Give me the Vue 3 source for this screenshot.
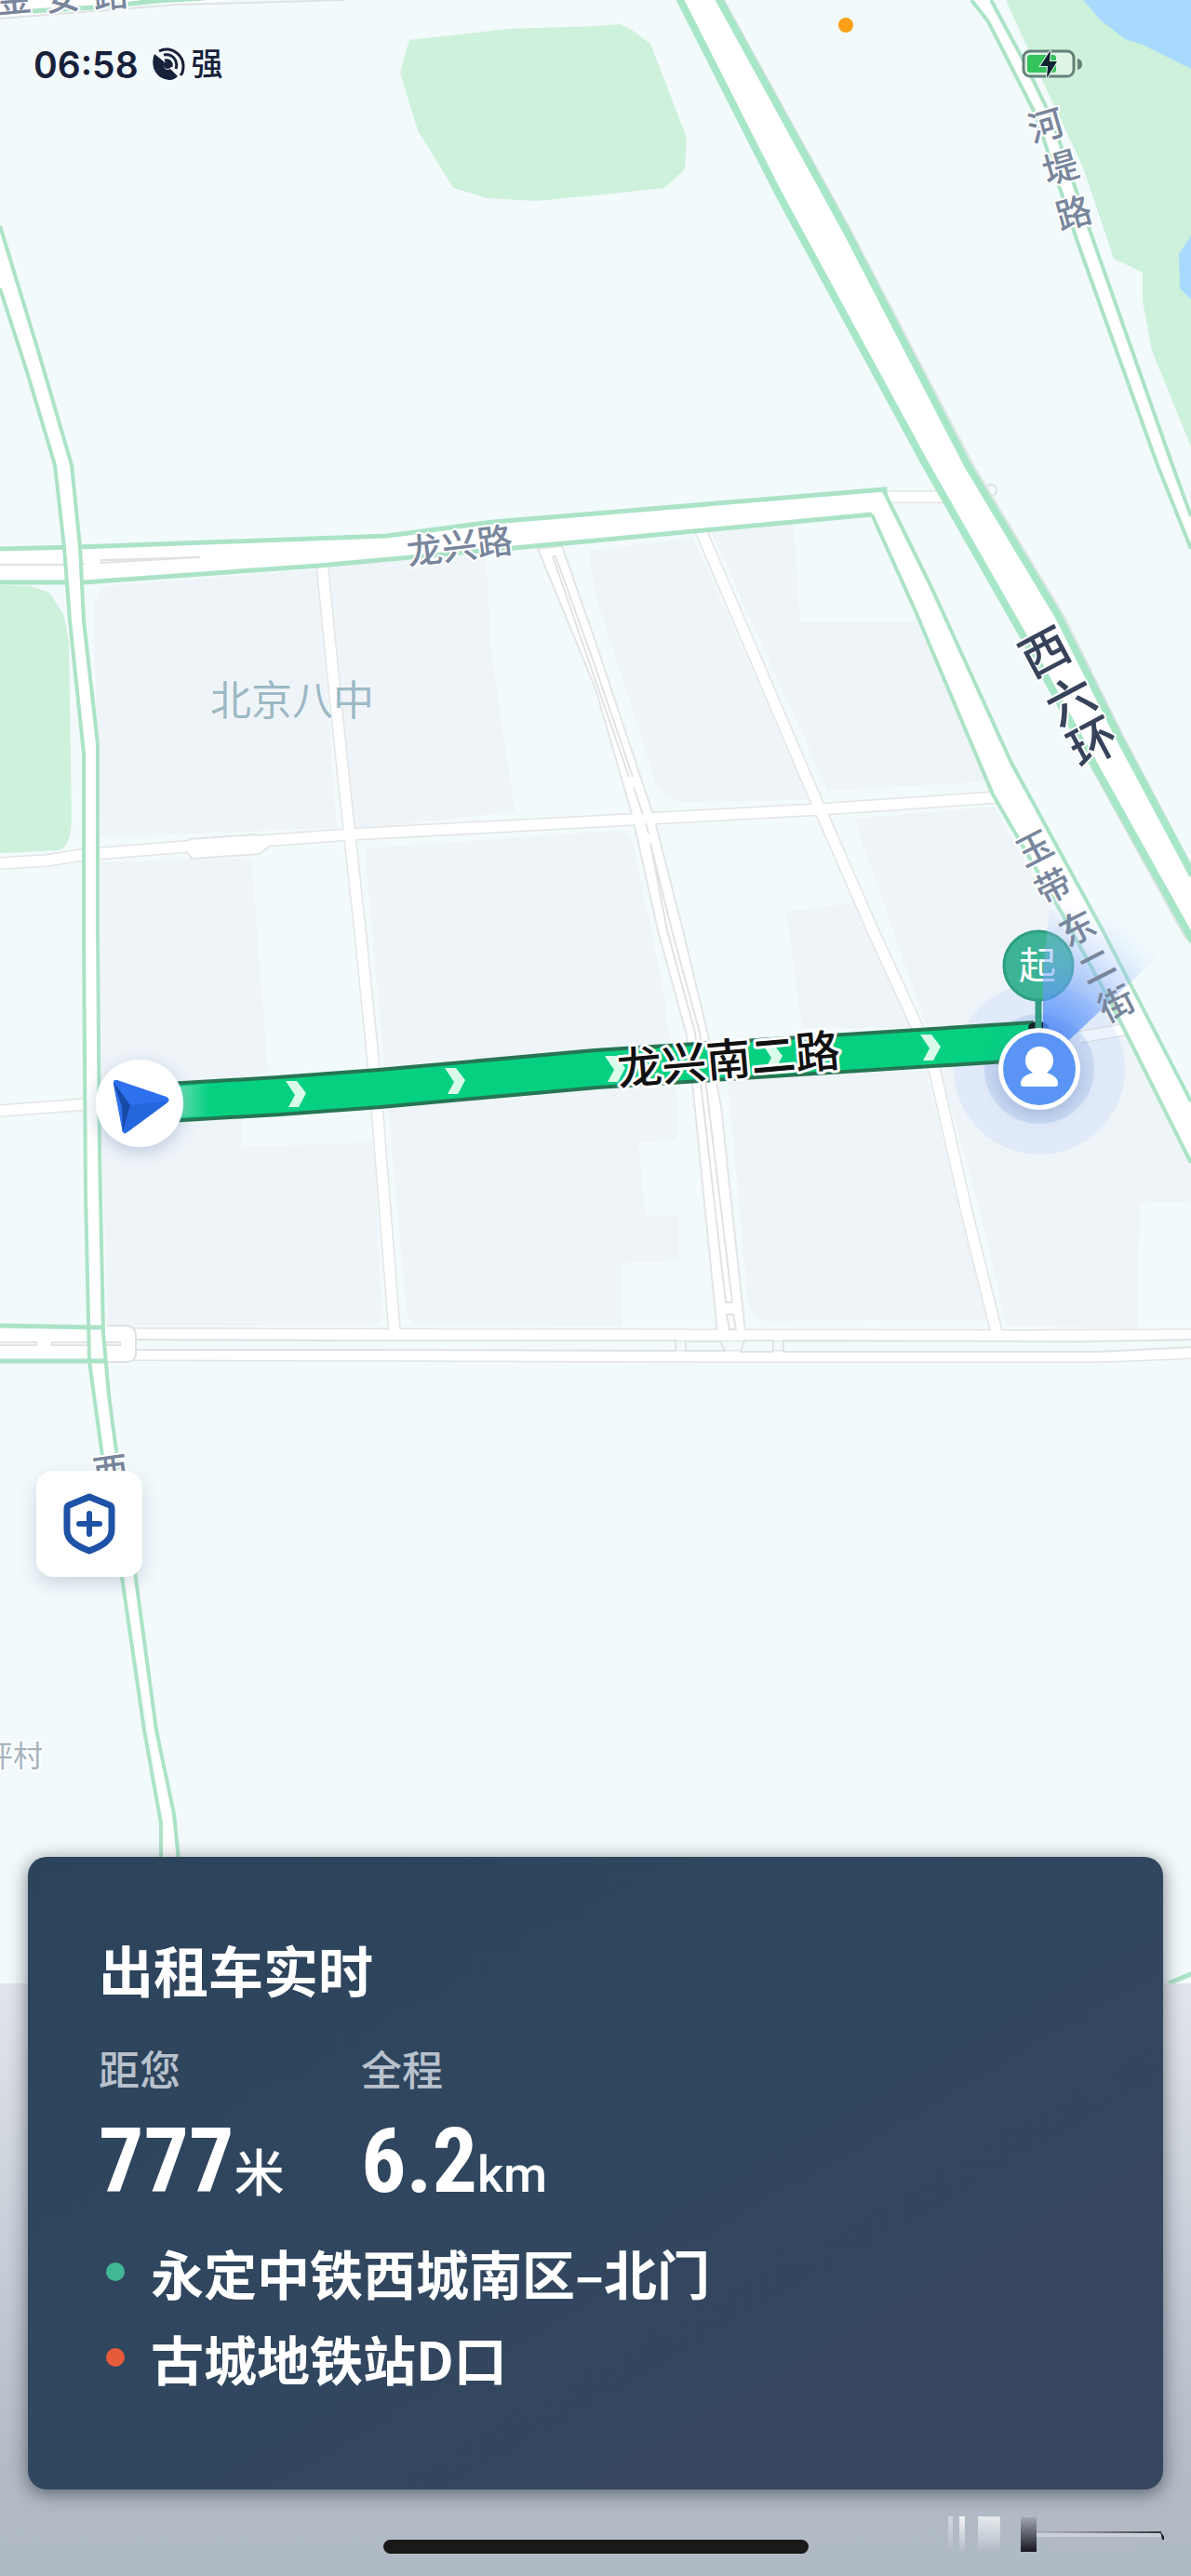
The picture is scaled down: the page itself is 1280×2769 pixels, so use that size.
<template>
  <div class="page">
    <!-- 地图底图 -->
    <svg class="map" viewBox="0 0 1280 2769" preserveAspectRatio="xMidYMin slice" aria-label="地图">
      <defs>
        <radialGradient id="beam" gradientUnits="userSpaceOnUse" cx="1117" cy="1130" r="168">
          <stop offset="0" stop-color="#3f80fa" stop-opacity="0.95" />
          <stop offset="0.35" stop-color="#5f97fb" stop-opacity="0.7" />
          <stop offset="0.7" stop-color="#8fb6fc" stop-opacity="0.35" />
          <stop offset="1" stop-color="#cfe0fe" stop-opacity="0" />
        </radialGradient>
        <linearGradient id="routeHead" x1="0" x2="1" y1="0" y2="0">
          <stop offset="0" stop-color="#ffffff" stop-opacity="0.4" />
          <stop offset="1" stop-color="#ffffff" stop-opacity="0" />
        </linearGradient>
        <filter id="soft" x="-50%" y="-50%" width="200%" height="200%">
          <feDropShadow dx="0" dy="5" stdDeviation="9" flood-color="#5877a8" flood-opacity="0.35" />
        </filter>
      </defs>

      <!-- 绿地和水系 -->
      <path v-for="d in parks" :key="d" class="park" :d="d" />
      <path v-for="d in waters" :key="d" class="water" :d="d" />

      <!-- 街区 -->
      <path v-for="d in blocks" :key="d" class="block" :d="d" />

      <!-- 支路 -->
      <path v-for="d in lanes" :key="'c' + d" class="lane-case" :d="d" />
      <path class="wide" d="M198 912 L203 902 L275 897 L290 900 V909 L279 918 L206 923 Z" />
      <path class="wide" d="M578 590 L640 740 L679 875 L707 1000 L738 1113 L745 1173 L771 1432 H801 L775 1190 L762 1117 L734 1000 L705 887 L701 873 L640 690 L604 587 Z" />
      <path v-for="d in lanes" :key="'f' + d" class="lane" :d="d" />
      <path class="median" d="M594 598 H597 L638 712 L680 835 M594 598 L636 720 L676 835 M681 846 L691 876 M694 885 L697 896 M699 906 L722 1000 L752 1110 L787 1400 H780 L747 1110 L717 1000 Z M781 1413 H788 L791 1429 H784 Z" />
      <path class="median fill" d="M146 1440 L400 1441 H726 V1452 L400 1451 H146 Z M737 1442 H774 L779 1452 H737 Z M800 1441 H831 V1453 H796 Z M842 1441 L1160 1442 L1282 1440 V1448 L1180 1453 H842 Z" />
      <circle class="median" cx="1065" cy="527" r="6" />

      <!-- 主路 -->
      <path class="road" d="M0 1425 H136 Q146 1426 146 1436 V1454 Q146 1464 136 1464 H0 Z" />
      <path class="median box" d="M115 1425 H136 Q146 1426 146 1436 V1454 Q146 1464 136 1464 H115" />
      <path class="median" d="M0 1443 H39 V1446 H0 M56 1443 H129 V1446 H56 Z" />
      <path class="road" d="M0 590 L86 588 L416 576 L530 561 L640 552 L951 526 L999 627 L1093 827 L1185 1000 L1280 1184 V1250 L1195 1080 L1073 863 L983 655 L937 553 L640 581 L343 608 L90 626 H0 Z" />
      <path class="edge" d="M0 590 L86 588 L416 576 L530 561 L640 552 L951 526 V531 M0 626 H90 L343 608 L640 581 L937 553" />
      <path class="edge thin" d="M951 530 L999 627 L1087 820 L1185 1000 L1280 1184 M937 553 L983 655 L1067 854 L1142 983 L1195 1080 L1280 1250" />
      <path class="median" d="M109 602 L215 599 L109 605 Z M0 607 H70 M90 605 V607" />
      <path class="road" d="M-3 235 L0 243 L41 377 L77 500 L86 588 L90 667 L105 800 V1000 L107 1240 L111 1433 L117 1500 L125 1560 L145 1690 L168 1860 L187 1950 L193 2010 H173 V1960 L160 1860 L131 1695 L110 1565 L101 1500 L96 1463 L92 1283 L90 1000 V800 L75 667 L69 588 L59 500 L30 403 L0 310 Z" />
      <path class="edge thin" d="M0 243 L41 377 L77 500 L86 588 L90 667 L105 800 V1000 L107 1240 L111 1433 L117 1500 L125 1560 L145 1690 L168 1860 L187 1950 L193 2010 M0 310 L30 403 L59 500 L69 588 L75 667 L90 810 V1000 L92 1283 L96 1463 L101 1500 L110 1565 L131 1695 L155 1860 L173 1960 V2010" />
      <path class="edge" d="M0 1425 L112 1427 M0 1463 H113" />
      <path class="median" d="M778 0 L914 247 L1046 500 L1144 663 L1208 793 L1280 930 M1090 665 L1150 783 L1264 990 L1275 1010" />
      <path class="road" d="M729 0 H773 L909 247 L1040 500 L1138 663 L1203 793 L1280 937 V1008 L1158 783 L1101 680 L995 500 L836 207 Z" />
      <path class="edge bold" d="M729 -4 L836 207 L995 500 L1101 686 L1158 790 L1282 1012 M771 -4 L909 247 L1040 500 L1138 663 L1203 793 L1282 941" />
      <path class="road" d="M1044 0 H1065 L1101 67 L1130 127 L1171 247 L1260 500 L1280 555 V587 L1244 500 L1158 260 L1113 123 L1062 23 Z" />
      <path class="edge thin" d="M1044 0 L1062 23 L1113 123 L1158 260 L1244 500 L1280 590 M1065 0 L1101 67 L1130 127 L1171 247 L1260 500 L1280 555" />
      <path class="road" d="M0 18 L190 3 L250 0 H0 Z" />
      <path class="edge" d="M0 14 L100 8 L180 0 M150 2 L220 -2" />
      <path class="median" d="M0 20 L190 5 L370 0" />
      <path class="edge" d="M1256 2132 L1282 2121" />

      <!-- 定位光圈 -->
      <circle cx="1117" cy="1149" r="92" class="halo" />
      <circle cx="1117" cy="1149" r="59" class="halo inner" />

      <!-- 路线 -->
      <path class="route-case" :d="route" />
      <path class="route" :d="route" />
      <path d="M190 1168 L225 1165 V1199 L190 1201 Z" fill="url(#routeHead)" />
      <path
        v-for="c in chevrons"
        :key="c.x"
        class="chevron"
        d="M-11 -14 H1 L11 -1 L3 14 H-8 L-1 1 Z"
        :transform="`translate(${c.x} ${c.y})`"
      />

      <!-- 文字标注 -->
      <text
        v-for="(t, i) in labels"
        :key="i"
        :class="['label', t.kind]"
        :transform="`translate(${t.x} ${t.y}) rotate(${t.r})`"
        dy="0.36em"
      >{{ t.text }}</text>

      <!-- 车辆位置 -->
      <circle cx="150" cy="1186" r="47" fill="#fff" filter="url(#soft)" />
      <path d="M126 1161 L179 1179 Q184 1182 179 1186 L137 1217 Q131 1220 131 1213 L122 1166 Q121 1160 126 1161 Z" fill="#2e70ee" />
      <path d="M122 1163 L140 1188 L132 1217 L131 1190 Z" fill="#184aa8" />
      <path d="M140 1188 L182 1183 L133 1219 Z" fill="#2466dc" />

      <!-- 起点 -->
      <ellipse cx="1116" cy="1104" rx="11" ry="6" fill="#10201f" />
      <path d="M1116 1070 V1106" class="stem" />
      <circle cx="1116" cy="1038" r="37" class="pin" />
      <text class="pin-text" x="1115" y="1038" dy="0.36em">起</text>
      <path d="M1121 1116 V1040 L1130 960 L1270 960 L1270 1004 L1149 1118 Z" fill="url(#beam)" />
      <text
        v-for="(t, i) in overBeam"
        :key="'b' + i"
        class="label street bare"
        :transform="`translate(${t.x} ${t.y}) rotate(${t.r})`"
        dy="0.36em"
      >{{ t.text }}</text>
      <circle cx="1117" cy="1149" r="44" fill="#fff" filter="url(#soft)" />
      <circle cx="1117" cy="1149" r="39" fill="#5a95f6" />
      <path d="M1117 1125 C1126 1125 1132 1132 1132 1140 C1132 1146 1129 1150 1125 1153 C1133 1156 1137 1159 1137 1165 Q1137 1168 1134 1168 H1100 Q1097 1168 1097 1165 C1097 1159 1101 1156 1110 1153 C1105 1150 1102 1146 1102 1140 C1102 1132 1108 1125 1117 1125 Z" fill="#fff" />
    </svg>

    <!-- 状态栏 -->
    <header class="status">
      <div class="status-left">
        <span class="time">06:58</span>
        <svg class="signal" viewBox="0 0 36 36">
          <path d="M3 7 C-2 20 4 34 19 35 C23 35 26 33 28 31 L20 23 C15 26 11 21 14 16 Z" fill="#17213a" />
          <circle cx="17" cy="19" r="4" fill="#17213a" />
          <path d="M13 8 C22 6 29 14 26 23 M8 4 C21 -3 38 9 33 27 L31 30 M14 14 C20 13 22 17 21 21" fill="none" stroke="#17213a" stroke-width="3" />
        </svg>
        <span class="strong">强</span>
      </div>
      <i class="mic"></i>
      <svg class="battery" viewBox="0 0 66 34">
        <rect x="2" y="3" width="54" height="27" rx="7" fill="#dff5e6" stroke="#65807a" stroke-width="3" />
        <rect x="6" y="7" width="31" height="19" rx="3" fill="#34c35c" />
        <path d="M60 11 Q65 12 65 17 Q65 22 60 23 Z" fill="#65807a" />
        <path d="M31 2 L20 19 H28 L27 32 L38 14 H30 Z" fill="#0f2430" stroke="#e8faee" stroke-width="2" paint-order="stroke" />
      </svg>
    </header>

    <div class="tools">
      <button class="safe" type="button" aria-label="安全中心">
        <svg viewBox="0 0 56 66">
          <path d="M28 4 L50 13 Q52 14 52 17 V40 C52 51 41 57 28 62 C15 57 4 51 4 40 V17 Q4 14 6 13 Z" fill="none" stroke="#1e52a6" stroke-width="7" stroke-linejoin="round" />
          <path d="M28 22 V44 M17 33 H39" stroke="#1e52a6" stroke-width="6" stroke-linecap="round" />
        </svg>
      </button>
    </div>

    <!-- 行程卡片 -->
    <section class="sheet">
      <div class="card">
        <h1>出租车实时</h1>
        <div class="stats">
          <div v-for="s in stats" :key="s.name" class="stat">
            <div class="name">{{ s.name }}</div>
            <div class="value"><b>{{ s.num }}</b><span>{{ s.unit }}</span></div>
          </div>
        </div>
        <ul class="stops">
          <li v-for="p in stops" :key="p.name"><i :class="p.type"></i>{{ p.name }}</li>
        </ul>
      </div>
      <footer class="bottom">
        <div class="home"></div>
        <svg class="glint" viewBox="0 0 240 50">
          <defs>
            <linearGradient id="dark" x1="0" x2="0" y1="0" y2="1">
              <stop offset="0" stop-color="#a0a6b1" />
              <stop offset="1" stop-color="#16161f" />
            </linearGradient>
            <linearGradient id="light" x1="0" x2="0" y1="0" y2="1">
              <stop offset="0" stop-color="#f3f5f7" />
              <stop offset="1" stop-color="#b4bdc8" />
            </linearGradient>
            <linearGradient id="line" x1="0" x2="1" y1="0" y2="0">
              <stop offset="0" stop-color="#84858d" stop-opacity="0.3" />
              <stop offset="1" stop-color="#33333a" />
            </linearGradient>
          </defs>
          <rect x="8" y="5" width="5" height="37" fill="url(#light)" opacity="0.5" />
          <rect x="20" y="5" width="6" height="37" fill="url(#light)" />
          <rect x="40" y="5" width="24" height="37" fill="url(#light)" opacity="0.8" />
          <rect x="86" y="6" width="17" height="37" fill="url(#dark)" />
          <rect x="118" y="5" width="88" height="37" fill="#b9bbc8" opacity="0.3" />
          <rect x="103" y="22" width="134" height="5" fill="#dcdfe5" opacity="0.6" />
          <rect x="103" y="21" width="134" height="2" fill="url(#line)" />
          <path d="M236 21 L241 28 V30 H238 Z" fill="#202027" />
        </svg>
      </footer>
    </section>
  </div>
</template>

<script setup>
import { ref } from 'vue'

const stats = ref([
  { name: '距您', num: '777', unit: '米' },
  { name: '全程', num: '6.2', unit: 'km' }
])

const stops = ref([
  { name: '永定中铁西城南区–北门', type: 'start' },
  { name: '古城地铁站D口', type: 'end' }
])

const parks = [
  'M440 43 L548 31 L640 28 L666 26 L680 33 L699 47 L738 148 L736 182 L714 202 L640 210 L576 216 L524 213 L487 202 L449 140 L430 78 Z',
  'M1081 0 L1122 90 L1164 180 L1197 278 L1228 293 V323 L1238 377 L1280 480 V0 Z',
  'M0 629 L32 630 L53 637 L69 662 L74 690 L77 880 Q76 912 62 914 L0 917 Z'
]

const waters = [
  'M1164 0 L1183 22 L1209 42 L1228 48 L1280 74 V0 Z',
  'M1280 253 L1267 273 L1268 310 L1280 322 Z'
]

const blocks = [
  'M110 630 L342 612 L362 890 L108 900 L100 650 Z',
  'M354 608 L522 596 L528 700 L553 872 L380 892 Z',
  'M108 927 L270 922 L288 1150 L260 1170 V1233 L402 1228 L410 1405 Q412 1425 395 1425 L116 1425 L108 1170 Z',
  'M392 912 L660 893 Q675 893 680 905 L712 1060 L728 1180 V1225 L686 1228 L694 1307 H730 V1355 L668 1358 V1425 H450 Q436 1420 436 1400 Z',
  'M632 592 L745 578 L870 860 L735 862 Q710 855 706 845 L640 640 Z',
  'M765 573 L853 560 L860 668 H985 L1065 840 L890 850 Z',
  'M918 880 L1068 867 L1160 1030 L1205 1100 L1280 1254 V1291 L1225 1293 L1222 1428 L1082 1425 L1050 1290 L1005 1130 Z',
  'M845 980 L920 970 L985 1105 L862 1105 Z',
  'M782 1160 L995 1150 L1060 1418 L824 1420 Q806 1416 804 1400 Z'
]

const lanes = [
  'M346 604 L363 777 L375 890 L387 1000 L402 1150 L424 1432',
  'M0 928 L50 925 L88 919 L200 910 L375 897 L640 883 L880 870 L1072 857',
  'M753 570 L879 865 L938 1000 L987 1107 L1005 1153 L1040 1307 L1071 1432',
  'M0 1194 L92 1187',
  'M1160 1115 L1212 1106',
  'M955 534 H1018',
  'M140 1434 L700 1435 L1100 1436 L1282 1435',
  'M140 1456 L800 1458 L1180 1458 L1282 1454'
]

const route = 'M180 1185 L300 1178 L408 1170 L640 1149 L1112 1119'

const chevrons = [
  { x: 318, y: 1176 },
  { x: 489, y: 1162 },
  { x: 661, y: 1149 },
  { x: 830, y: 1136 },
  { x: 1000, y: 1126 }
]

const labels = [
  { text: '金', x: 15, y: -1, r: -5, kind: 'street' },
  { text: '安', x: 67, y: -3, r: -5, kind: 'street' },
  { text: '路', x: 119, y: -6, r: -5, kind: 'street' },
  { text: '河', x: 1124, y: 135, r: -16, kind: 'street' },
  { text: '堤', x: 1140, y: 180, r: -16, kind: 'street' },
  { text: '路', x: 1154, y: 229, r: -16, kind: 'street' },
  { text: '龙兴路', x: 494, y: 587, r: -7, kind: 'street' },
  { text: '北京八中', x: 314, y: 753, r: 0, kind: 'poi' },
  { text: '西', x: 1123, y: 701, r: -28, kind: 'ring' },
  { text: '六', x: 1151, y: 753, r: -28, kind: 'ring' },
  { text: '环', x: 1175, y: 798, r: -28, kind: 'ring' },
  { text: '玉', x: 1112, y: 912, r: -27, kind: 'street' },
  { text: '带', x: 1132, y: 953, r: -27, kind: 'street' },
  { text: '西', x: 119, y: 1581, r: -8, kind: 'street' },
  { text: '坪村', x: 14, y: 1887, r: 0, kind: 'village' },
  { text: '龙兴南二路', x: 783, y: 1139, r: -5, kind: 'main' }
]

const overBeam = [
  { text: '东', x: 1158, y: 998, r: -27 },
  { text: '二', x: 1179, y: 1039, r: -27 },
  { text: '街', x: 1200, y: 1079, r: -27 }
]
</script>

<style>
body {
  margin: 0;
}
</style>

<style scoped>
.page {
  position: relative;
  display: flex;
  flex-direction: column;
  min-height: 100vh;
  overflow: hidden;
  background: #f2fafc;
  font-family: Inter, "Noto Sans CJK SC", sans-serif;
}

/* 地图 */
.map {
  position: absolute;
  inset: 0;
  width: 100%;
  height: 100%;
}
.park { fill: #cdf1da; }
.water { fill: #a9dafe; }
.block { fill: #eff4f8; }
.lane-case { fill: none; stroke: #e3e5e6; stroke-width: 14px; }
.lane { fill: none; stroke: #fff; stroke-width: 11px; }
.wide { fill: #fff; stroke: #e3e5e6; stroke-width: 2px; }
.median { fill: none; stroke: #e0e3e4; stroke-width: 2px; }
.median.fill { fill: #f2fafc; }
.median.box { fill: #fff; }
.road { fill: #fff; }
.edge { fill: none; stroke: #abe3c6; stroke-width: 5px; }
.edge.thin { stroke-width: 4px; }
.edge.bold { stroke: #a8e6c8; stroke-width: 8px; }
.halo { fill: #7ca9f4; opacity: 0.13; }
.halo.inner { fill: #6d97e3; opacity: 0.2; }
.route-case { fill: none; stroke: #267553; stroke-width: 44px; }
.route { fill: none; stroke: #05d080; stroke-width: 36px; }
.chevron { fill: #d9fbe9; }
.label {
  font-family: "Noto Sans CJK SC", sans-serif;
  text-anchor: middle;
  paint-order: stroke;
  stroke: #fff;
  stroke-width: 4px;
  stroke-linejoin: round;
}
.street { font-size: 38px; font-weight: 500; fill: #78869c; }
.street.bare { stroke: none; }
.poi { font-size: 44px; fill: #9db9c5; stroke: #f4f8fb; stroke-width: 2px; }
.ring { font-size: 52px; font-weight: 500; fill: #37435a; }
.village { font-size: 32px; fill: #a3b4bf; }
.main { font-size: 48px; font-weight: 500; fill: #111; stroke-width: 6px; }
.stem { stroke: #319c84; stroke-width: 7px; }
.pin { fill: #3bb394; stroke: #2f9f80; stroke-width: 3px; }
.pin-text {
  font-family: "Noto Sans CJK SC", sans-serif;
  font-size: 40px;
  fill: #fff;
  text-anchor: middle;
}

/* 状态栏 */
.status {
  position: relative;
  display: flex;
  align-items: center;
  justify-content: space-between;
  margin-top: 40px;
  padding: 0 116px 0 36px;
  height: 58px;
  color: #17213a;
}
.status-left {
  display: flex;
  align-items: center;
}
.time { font-size: 39px; font-weight: 600; }
.signal { width: 36px; height: 36px; margin: 0 7px 0 14px; }
.strong { font-size: 34px; font-weight: 500; line-height: 58px; }
.mic {
  position: absolute;
  left: 71%;
  top: -21px;
  width: 16px;
  height: 16px;
  margin-left: -8px;
  border-radius: 50%;
  background: #fb9f16;
}
.battery { width: 66px; height: 34px; }

.tools {
  position: relative;
  margin-top: auto;
  padding: 0 39px 301px;
}
.safe {
  display: flex;
  align-items: center;
  justify-content: center;
  width: 114px;
  height: 114px;
  padding: 0;
  border: 0;
  border-radius: 18px;
  background: #fff;
  box-shadow: 0 8px 20px rgba(60, 80, 110, 0.2);
}
.safe svg { width: 56px; height: 66px; }

/* 行程卡片 */
.sheet {
  position: relative;
  padding: 0 30px;
  background: linear-gradient(#e2e5eb, #c8cfd8 36%, #b3bcc7 66%, #abb6c1) 0 136px no-repeat;
}
.card {
  box-sizing: border-box;
  min-height: 680px;
  padding: 77px 76px 56px;
  border-radius: 20px;
  color: #fff;
  background: linear-gradient(150deg, #2c435c, #30475f 50%, #37465f 78%);
  box-shadow: 0 4px 20px rgba(30, 35, 50, 0.6);
  font-family: "Noto Sans CJK SC", sans-serif;
}
h1 {
  margin: 0;
  font-size: 59px;
  font-weight: 700;
  line-height: 88px;
}
.stats {
  display: flex;
  margin-top: 32px;
}
.stat { min-width: 282px; }
.name {
  font-size: 44px;
  font-weight: 500;
  line-height: 60px;
  color: #b8c1cc;
}
.value {
  display: flex;
  align-items: baseline;
  height: 116px;
  margin-top: 12px;
  line-height: 116px;
}
.value b {
  font-family: "Liberation Sans Narrow", "Roboto Condensed", Roboto, "Noto Sans CJK SC", sans-serif;
  font-size: 96px;
}
.value span {
  font-family: Roboto, "Noto Sans CJK SC", sans-serif;
  font-size: 54px;
  font-weight: 500;
}
.stops {
  margin: 15px 0 0;
  padding: 0;
  list-style: none;
}
.stops li {
  display: flex;
  align-items: center;
  gap: 28px;
  padding-left: 8px;
  font-size: 57px;
  font-weight: 700;
  line-height: 92px;
}
.stops i {
  width: 20px;
  height: 20px;
  border-radius: 50%;
}
.start { background: #41b796; }
.end { background: #e65c3b; }

.bottom {
  position: relative;
  display: flex;
  justify-content: center;
  height: 93px;
}
.home {
  width: 457px;
  max-width: 60%;
  height: 15px;
  margin-top: 54px;
  border-radius: 8px;
  background: #191918;
}
.glint {
  position: absolute;
  right: -1px;
  top: 24px;
  width: 240px;
  height: 50px;
}
</style>
